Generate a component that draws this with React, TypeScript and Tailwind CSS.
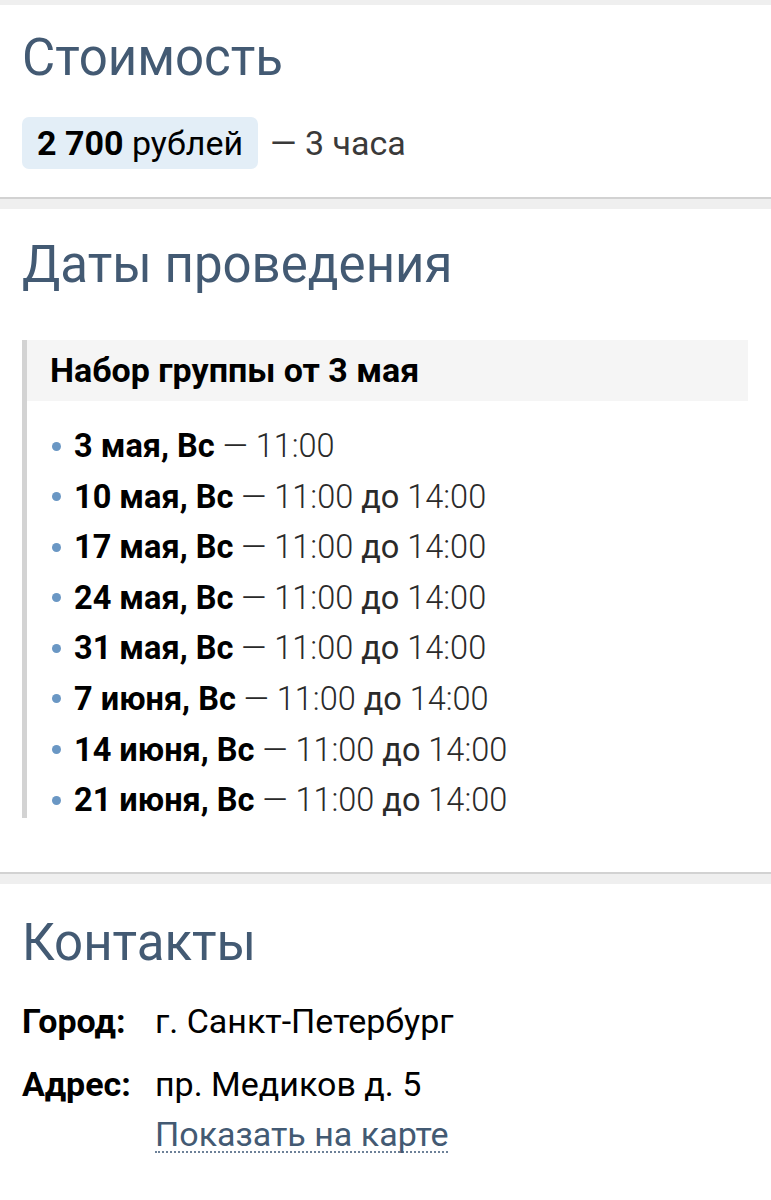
const dates = [
  { day: '3 мая, Вс', from: '11:00', to: '' },
  { day: '10 мая, Вс', from: '11:00', to: '14:00' },
  { day: '17 мая, Вс', from: '11:00', to: '14:00' },
  { day: '24 мая, Вс', from: '11:00', to: '14:00' },
  { day: '31 мая, Вс', from: '11:00', to: '14:00' },
  { day: '7 июня, Вс', from: '11:00', to: '14:00' },
  { day: '14 июня, Вс', from: '11:00', to: '14:00' },
  { day: '21 июня, Вс', from: '11:00', to: '14:00' },
];

const Divider = () => <div className="h-[12px] border-t-2 border-[#d2d2d2] bg-[#efefef]" />;

const Heading = ({ children }: { children: React.ReactNode }) => (
  <h2 className="text-[51px] leading-[60px] font-normal text-[#435a73]">{children}</h2>
);

export default function App() {
  return (
    <div className="min-h-[1200px] bg-white pt-[5px] text-black" style={{ fontFamily: 'Roboto, "Noto Sans", sans-serif' }}>
      <div className="fixed top-0 left-0 right-0 h-[5px] bg-[#efefef]" />

      <section className="bg-white px-[22px] pt-[23px] pb-[28px]">
        <Heading>Стоимость</Heading>
        <div className="mt-[29px] flex items-center gap-[12px]">
          <span className="inline-flex h-[52px] items-center rounded-[7px] bg-[#e3eef7] px-[15px] text-[34px]">
            <b className="font-bold">2 700</b>&nbsp;рублей
          </span>
          <span className="text-[34px] text-[#3a3a3a]">— 3 часа</span>
        </div>
      </section>

      <Divider />

      <section className="bg-white px-[22px] pt-[26px] pb-[54px]">
        <Heading>Даты проведения</Heading>
        <div className="mt-[45px] border-l-[5px] border-[#d3d3d3] mr-[1px]">
          <div className="flex h-[61px] items-center bg-[#f5f5f5] px-[23px] text-[34px] font-bold">
            Набор группы от 3 мая
          </div>
          <ul className="flex flex-col gap-[14.6px] pt-[27px] pl-[25px]">
            {dates.map((d, i) => (
              <li key={i} className="flex items-center h-[36px] text-[32.5px] leading-[36px]">
                <span className="mr-[13px] h-[9px] w-[9px] rounded-full bg-[#6a97c4]" />
                <b className="font-bold">{d.day}</b>
                <span className="font-light text-[#2a2a2a]">
                  &nbsp;—&nbsp;{d.from}
                  {d.to && (
                    <>
                      {' '}
                      <span className="font-normal">до</span> {d.to}
                    </>
                  )}
                </span>
              </li>
            ))}
          </ul>
        </div>
      </section>

      <Divider />

      <section className="bg-white px-[22px] pt-[29px] pb-[40px]">
        <Heading>Контакты</Heading>
        <div className="mt-[30px] grid grid-cols-[133px_1fr] gap-y-[27px] text-[34px] leading-[36px]">
          <span className="font-bold">Город:</span>
          <span>г. Санкт-Петербург</span>
          <span className="font-bold">Адрес:</span>
          <div className="flex flex-col items-start">
            <span>пр. Медиков д. 5</span>
            <a className="mt-[15px] border-b-2 border-dotted border-[#6d8198] leading-[34px] text-[#435a73]">Показать на карте</a>
          </div>
        </div>
      </section>
    </div>
  );
}
